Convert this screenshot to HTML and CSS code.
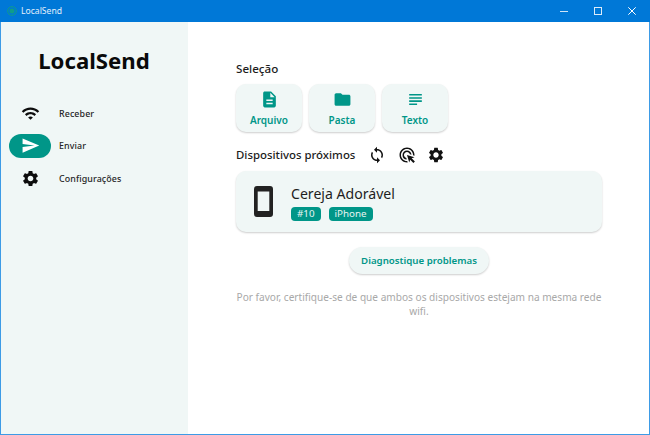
FILE: index.html
```html
<!DOCTYPE html>
<html lang="pt">
<head>
<meta charset="utf-8">
<title>LocalSend</title>
<link rel="stylesheet" href="styles.css">
</head>
<body>
<div class="window">
  <header class="titlebar">
    <div class="app-id">
      <svg class="app-logo" viewBox="0 0 12 12"><circle cx="6" cy="6" r="5.2" fill="none" stroke="#0f9d8a" stroke-width="1.2"/><circle cx="6" cy="6" r="3" fill="#0f9d8a"/></svg>
      <span>LocalSend</span>
    </div>
    <div class="win-controls">
      <svg viewBox="0 0 8 8" class="win-btn"><path d="M0 4.5h8" stroke="#cfe4f7" fill="none"/></svg>
      <svg viewBox="0 0 8 8" class="win-btn"><rect x=".5" y=".5" width="7" height="7" stroke="#dcebf9" fill="none"/></svg>
      <svg viewBox="0 0 8 8" class="win-btn"><path d="M.3.3l7.4 7.4M7.7.3L.3 7.7" stroke="#fff" fill="none"/></svg>
    </div>
  </header>
  <div class="content">
    <aside class="sidebar">
      <h1 class="brand">LocalSend</h1>
      <nav class="nav">
        <div class="nav-item">
          <span class="nav-icon"><svg viewBox="0 0 24 24" class="ic-nav"><path d="M1 9l2 2c4.97-4.97 13.03-4.97 18 0l2-2C16.93 2.93 7.08 2.93 1 9zm8 8l3 3 3-3c-1.65-1.66-4.34-1.66-6 0zm-4-4l2 2c2.76-2.76 7.24-2.76 10 0l2-2C15.14 9.14 8.87 9.14 5 13z"/></svg></span>
          <span class="nav-label">Receber</span>
        </div>
        <div class="nav-item">
          <span class="nav-icon active"><svg viewBox="0 0 24 24" class="ic-nav white"><path d="M2.01 21L23 12 2.01 3 2 10l15 2-15 2z"/></svg></span>
          <span class="nav-label">Enviar</span>
        </div>
        <div class="nav-item">
          <span class="nav-icon"><svg viewBox="0 0 24 24" class="ic-nav"><path d="M19.14 12.94c.04-.3.06-.61.06-.94 0-.32-.02-.64-.07-.94l2.03-1.58c.18-.14.23-.41.12-.61l-1.92-3.32c-.12-.22-.37-.29-.59-.22l-2.39.96c-.5-.38-1.03-.7-1.62-.94l-.36-2.54c-.04-.24-.24-.41-.48-.41h-3.84c-.24 0-.43.17-.47.41l-.36 2.54c-.59.24-1.13.57-1.62.94l-2.39-.96c-.22-.08-.47 0-.59.22L2.74 8.87c-.12.21-.08.47.12.61l2.03 1.58c-.05.3-.09.63-.09.94s.02.64.07.94l-2.03 1.58c-.18.14-.23.41-.12.61l1.92 3.32c.12.22.37.29.59.22l2.39-.96c.5.38 1.03.7 1.62.94l.36 2.54c.05.24.24.41.48.41h3.84c.24 0 .44-.17.47-.41l.36-2.54c.59-.24 1.13-.56 1.62-.94l2.39.96c.22.08.47 0 .59-.22l1.92-3.32c.12-.22.07-.47-.12-.61l-2.01-1.58zM12 15.6c-1.98 0-3.6-1.62-3.6-3.6s1.62-3.6 3.6-3.6 3.6 1.62 3.6 3.6-1.62 3.6-3.6 3.6z"/></svg></span>
          <span class="nav-label">Configurações</span>
        </div>
      </nav>
    </aside>
    <main class="main">
      <h2 class="section-title">Seleção</h2>
      <div class="options">
        <div class="option">
          <svg viewBox="0 0 24 24" class="ic-opt"><path d="M14 2H6c-1.1 0-2 .9-2 2v16c0 1.1.9 2 2 2h12c1.1 0 2-.9 2-2V8l-6-6zm2 16H8v-2h8v2zm0-4H8v-2h8v2zm-3-5V3.5L18.5 9H13z"/></svg>
          <span>Arquivo</span>
        </div>
        <div class="option">
          <svg viewBox="0 0 24 24" class="ic-opt"><path d="M10 4H4c-1.1 0-1.99.9-1.99 2L2 18c0 1.1.9 2 2 2h16c1.1 0 2-.9 2-2V8c0-1.1-.9-2-2-2h-8l-2-2z"/></svg>
          <span>Pasta</span>
        </div>
        <div class="option">
          <svg viewBox="0 0 24 24" class="ic-opt"><path d="M14 17H4v2h10v-2zm6-8H4v2h16V9zM4 15h16v-2H4v2zM4 5v2h16V5H4z"/></svg>
          <span>Texto</span>
        </div>
      </div>
      <div class="nearby-head">
        <h2 class="section-title nearby-title">Dispositivos próximos</h2>
        <div class="tools">
          <svg viewBox="0 0 24 24" class="ic-tool"><path d="M12 4V1L8 5l4 4V6c3.31 0 6 2.69 6 6 0 1.01-.25 1.97-.7 2.8l1.46 1.46C19.54 15.03 20 13.57 20 12c0-4.42-3.58-8-8-8zm0 14c-3.31 0-6-2.69-6-6 0-1.01.25-1.97.7-2.8L5.24 7.74C4.46 8.97 4 10.43 4 12c0 4.42 3.58 8 8 8v3l4-4-4-4v3z"/></svg>
          <svg viewBox="0 0 24 24" class="ic-tool"><path d="M11.71 17.99A5.993 5.993 0 0 1 6 12c0-3.31 2.69-6 6-6 3.22 0 5.84 2.53 5.99 5.71l-2.1-.63C15.48 9.32 13.89 8 12 8c-2.21 0-4 1.79-4 4 0 1.89 1.32 3.48 3.08 3.89l.63 2.1zM22 12c0 .3-.01.6-.04.9l-1.97-.59c.01-.1.01-.21.01-.31 0-4.42-3.58-8-8-8s-8 3.58-8 8 3.58 8 8 8c.1 0 .21 0 .31-.01l.59 1.97c-.3.03-.6.04-.9.04-5.52 0-10-4.48-10-10S6.48 2 12 2s10 4.48 10 10zm-3.77 4.26L22 15l-10-3 3 10 1.26-3.77 4.27 4.27 1.98-1.98-4.28-4.26z"/></svg>
          <svg viewBox="0 0 24 24" class="ic-tool"><path d="M19.14 12.94c.04-.3.06-.61.06-.94 0-.32-.02-.64-.07-.94l2.03-1.58c.18-.14.23-.41.12-.61l-1.92-3.32c-.12-.22-.37-.29-.59-.22l-2.39.96c-.5-.38-1.03-.7-1.62-.94l-.36-2.54c-.04-.24-.24-.41-.48-.41h-3.84c-.24 0-.43.17-.47.41l-.36 2.54c-.59.24-1.13.57-1.62.94l-2.39-.96c-.22-.08-.47 0-.59.22L2.74 8.87c-.12.21-.08.47.12.61l2.03 1.58c-.05.3-.09.63-.09.94s.02.64.07.94l-2.03 1.58c-.18.14-.23.41-.12.61l1.92 3.32c.12.22.37.29.59.22l2.39-.96c.5.38 1.03.7 1.62.94l.36 2.54c.05.24.24.41.48.41h3.84c.24 0 .44-.17.47-.41l.36-2.54c.59-.24 1.13-.56 1.62-.94l2.39.96c.22.08.47 0 .59-.22l1.92-3.32c.12-.22.07-.47-.12-.61l-2.01-1.58zM12 15.6c-1.98 0-3.6-1.62-3.6-3.6s1.62-3.6 3.6-3.6 3.6 1.62 3.6 3.6-1.62 3.6-3.6 3.6z"/></svg>
        </div>
      </div>
      <div class="device-card">
        <svg viewBox="0 0 19 31" class="phone"><path fill-rule="evenodd" d="M3 0h13a3 3 0 0 1 3 3v25a3 3 0 0 1-3 3H3a3 3 0 0 1-3-3V3a3 3 0 0 1 3-3zm.7 5.5v19.5h11.6V5.5z"/></svg>
        <div class="device-info">
          <div class="device-name">Cereja Adorável</div>
          <div class="tags"><span class="tag">#10</span><span class="tag">iPhone</span></div>
        </div>
      </div>
      <div class="diag-wrap"><div class="diag">Diagnostique problemas</div></div>
      <p class="hint">Por favor, certifique-se de que ambos os dispositivos estejam na mesma rede wifi.</p>
    </main>
  </div>
</div>
</body>
</html>
```
FILE: styles.css
```css
* { box-sizing: border-box; }
html, body { margin: 0; height: 100%; }
body { font-family: "Noto Sans", "Open Sans", sans-serif; background: #fff; color: #1a1a1a; overflow: hidden; }
.window { width: 650px; height: 435px; display: flex; flex-direction: column; border: 1px solid #3d9be6; border-top: 0; }
.titlebar { height: 22px; flex: none; margin: 0 -1px; background: #0078d7; display: flex; align-items: center; justify-content: space-between; padding: 0 14px 0 7px; color: #e4f0fb; font-size: 8.6px; }
.app-id { display: flex; align-items: center; gap: 4px; }
.app-logo { width: 10px; height: 10px; }
.win-controls { display: flex; gap: 26px; align-items: center; }
.win-btn { width: 8px; height: 8px; display: block; }
.content { flex: 1; display: flex; min-height: 0; }
.sidebar { width: 187px; flex: none; background: #f0f7f6; padding: 21px 0 0 8px; }
.brand { margin: 0 0 22px; width: 170px; text-align: center; font-size: 22.2px; line-height: 36px; font-weight: 700; color: #0a0a0a; }
.nav { display: flex; flex-direction: column; gap: 8.5px; }
.nav-item { display: flex; align-items: center; gap: 8px; height: 24px; }
.nav-icon { width: 42px; height: 24px; border-radius: 12px; display: flex; align-items: center; justify-content: center; }
.nav-icon.active { background: #009688; }
.ic-nav { width: 19px; height: 19px; fill: #0d0d0d; }
.ic-nav.white { fill: #fff; }
.nav-label { font-size: 8.9px; font-weight: 500; color: #262626; letter-spacing: .1px; }
.main { flex: 1; padding: 38px 47px 0 48px; }
.section-title { margin: 0; font-size: 11.6px; line-height: 18px; font-weight: 500; color: #1c1c1c; }
.options { display: flex; gap: 7px; margin-top: 6px; }
.option { width: 66px; height: 48px; border-radius: 10px; background: #f0f7f6; box-shadow: 0 1px 2px rgba(0,0,0,.2); display: flex; flex-direction: column; align-items: center; justify-content: flex-start; padding-top: 6px; color: #009688; font-size: 10px; font-weight: 600; line-height: 16px; gap: 3px; }
.ic-opt { width: 19px; height: 19px; fill: #009688; }
.nearby-head { display: flex; align-items: center; margin-top: 13px; height: 20px; }
.nearby-title { width: 132px; font-size: 11.4px; }
.tools { display: flex; gap: 11.5px; }
.ic-tool { width: 18px; height: 18px; fill: #111; display: block; }
.device-card { margin-top: 6px; height: 61px; border-radius: 10px; background: #f0f7f6; box-shadow: 0 1px 2px rgba(0,0,0,.2); display: flex; align-items: center; padding: 0 0 0 18px; gap: 18px; }
.phone { width: 19px; height: 31px; fill: #222; flex: none; }
.device-info { display: flex; flex-direction: column; gap: 3px; padding-top: 2px; }
.device-name { font-size: 14.1px; line-height: 20px; color: #1e1e1e; }
.tags { display: flex; gap: 8px; }
.tag { height: 14.5px; line-height: 14.5px; padding: 0 6px; border-radius: 4px; background: #009688; color: #e6f4f2; font-size: 9.8px; }
.diag-wrap { display: flex; justify-content: center; margin-top: 15px; }
.diag { height: 27px; width: 140px; border-radius: 14px; background: #f0f7f6; box-shadow: 0 1px 2px rgba(0,0,0,.2); color: #009688; font-size: 9.7px; font-weight: 600; display: flex; align-items: center; justify-content: center; }
.hint { margin: 16px 0 0; text-align: center; font-size: 10.1px; line-height: 14px; color: #a8a8a8; }
```
